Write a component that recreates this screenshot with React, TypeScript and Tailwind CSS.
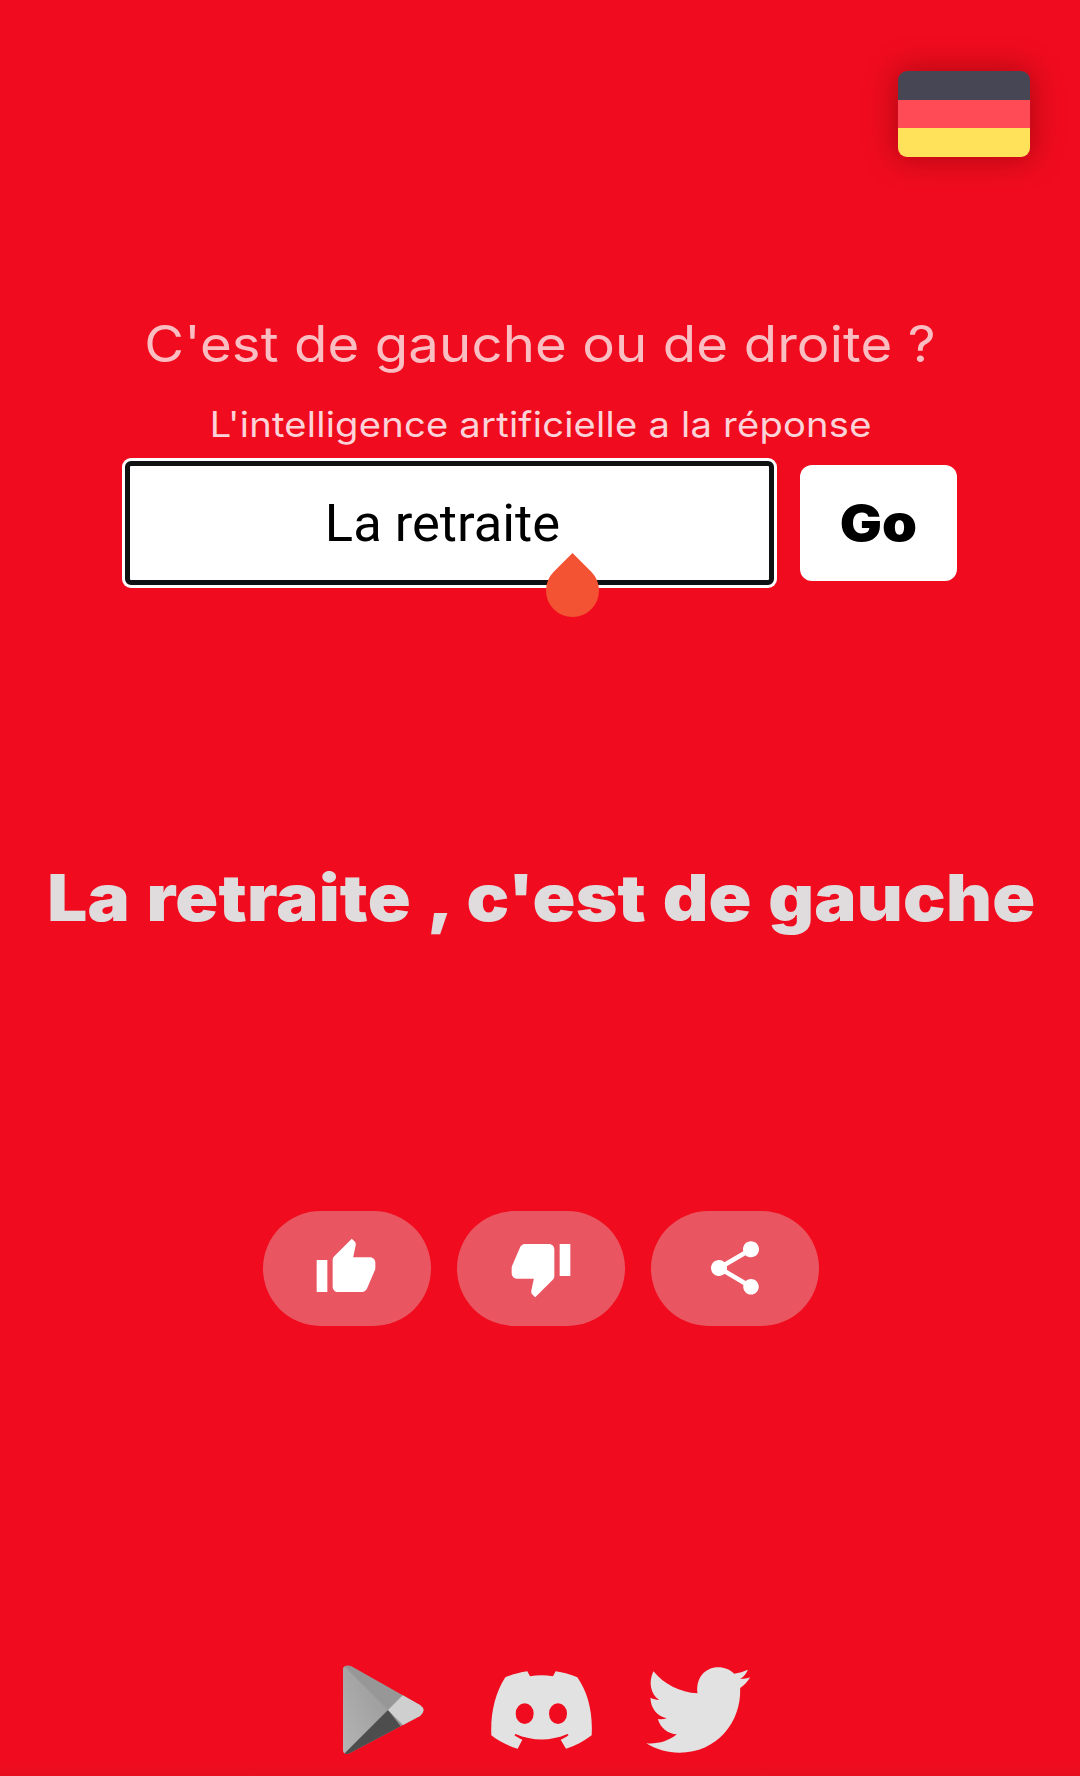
import { MdShare, MdThumbDown, MdThumbUp } from "react-icons/md";

function Flag() {
  return (
    <button
      aria-label="Deutsch"
      className="flex h-[86px] w-[132px] flex-col overflow-hidden rounded-[9px] shadow-[0_0_30px_3px_rgba(60,0,0,0.34)]"
    >
      <span className="w-full flex-1 bg-[#464655]" />
      <span className="w-full flex-1 bg-[#ff4b55]" />
      <span className="w-full flex-1 bg-[#ffe15a]" />
    </button>
  );
}

function PlayStore() {
  return (
    <svg viewBox="0 0 82 90" className="h-[90px] w-[82px]">
      <defs>
        <linearGradient id="left" x1="1" y1="0" x2="0" y2="1">
          <stop offset="0" stopColor="#979797" />
          <stop offset="1" stopColor="#b5b5b5" />
        </linearGradient>
        <clipPath id="shape">
          <path d="M0 4Q1 -1 8 1L77 40Q84 45 77 51L7 88Q0 91 0 84Z" />
        </clipPath>
      </defs>
      <g clipPath="url(#shape)">
        <path d="M0 0H82V90H0Z" fill="#979797" />
        <path d="M2 2L45 45L0 90V0Z" fill="url(#left)" />
        <path d="M45 45L0 90V92H82Z" fill="#4d4d4d" />
        <path d="M45 45L59 31L66 24H82V82Z" fill="#cfcfcf" />
      </g>
    </svg>
  );
}

function Discord() {
  return (
    <svg viewBox="513 92 303 234" className="h-[78px] w-[101px]" fill="currentColor">
      <path
        fillRule="evenodd"
        d="M622 93C600 96 577 102 556 111C525 158 511 220 514 285C537 303 565 317 593 325L607 298C598 294 590 290 583 284L587 281C637 303 692 303 742 281L746 284C739 290 731 294 722 298L738 325C766 317 791 303 815 285C819 215 803 155 772 111C751 102 729 96 707 93L699 108C677 104 652 104 630 108ZM587 220A27 31 0 1 0 641 220A27 31 0 1 0 587 220ZM687 220A27 31 0 1 0 741 220A27 31 0 1 0 687 220Z"
      />
    </svg>
  );
}

function Twitter() {
  return (
    <svg viewBox="138 79 314 258" className="h-[86px] w-[105px]" fill="currentColor">
      <path d="M160 92C190 130 240 156 292 158C286 112 315 80 354 80C373 80 390 87 402 99C417 97 430 92 443 87C439 98 430 108 420 115C431 115 441 113 450 110C443 123 432 134 420 142C424 245 350 336 238 336C202 336 166 326 138 308C172 311 204 302 230 281C204 280 181 262 173 235C182 237 191 236 200 233C171 226 151 203 151 171C160 175 168 177 177 178C151 160 144 124 160 92Z" />
    </svg>
  );
}

const pill =
  "flex h-[115px] w-[168px] items-center justify-center rounded-full bg-[#e95661] text-white";

export default function App() {
  return (
    <main className="flex h-[1776px] w-[1080px] flex-col items-center overflow-hidden bg-[linear-gradient(#f00c1e_0px,#f00c1e_1762px,#e60d1f_1776px)] font-['Inter',sans-serif]">
      <header className="flex h-[310px] w-full justify-end pt-[71px] pr-[50px]">
        <Flag />
      </header>
      <h1 className="h-[82px] origin-center scale-x-[1.09] text-[50px] leading-[69px] font-normal tracking-[0.1px] whitespace-nowrap text-[#f9bdc2]">
        C'est de gauche ou de droite ?
      </h1>
      <p className="h-[66px] origin-center scale-x-[1.09] pl-[2px] text-[35px] leading-[65px] font-normal tracking-[0.2px] whitespace-nowrap text-[#fcd3d8]">
        L'intelligence artificielle a la réponse
      </p>
      <form
        className="flex h-[130px] items-center gap-[23px] pr-[2px]"
        onSubmit={(e) => e.preventDefault()}
      >
        <div className="relative h-[130px] w-[655px] rounded-[9px] bg-white p-[3px]">
          <input
            defaultValue="La retraite"
            className="h-full w-full rounded-[6px] border-[5px] border-[#101214] bg-white pr-[13px] text-center font-[Roboto,sans-serif] text-[52.5px] text-black outline-none"
          />
          <span className="absolute top-[106px] left-[424px] h-[53px] w-[53px] rotate-45 rounded-tl-none rounded-tr-full rounded-br-full rounded-bl-full bg-[#f35233]" />
        </div>
        <button className="h-[116px] w-[157px] rounded-[12px] bg-white text-[50px] font-black text-black">
          <span className="inline-block scale-x-[1.12]">Go</span>
        </button>
      </form>
      <h2 className="mt-[262px] h-[100px] origin-center scale-x-[1.09] pl-[2px] text-[65px] leading-[95px] font-black tracking-[0.2px] [word-spacing:2px] whitespace-nowrap text-[#e0dcdd]">
        La retraite , c'est de gauche
      </h2>
      <div className="mt-[261px] flex gap-[26px] pl-[2px]">
        <button aria-label="D'accord" className={pill}>
          <MdThumbUp className="size-16 -translate-x-px -translate-y-px" />
        </button>
        <button aria-label="Pas d'accord" className={pill}>
          <MdThumbDown className="size-16 -translate-y-px" />
        </button>
        <button aria-label="Partager" className={pill}>
          <MdShare className="size-16 -translate-y-px" />
        </button>
      </div>
      <footer className="mt-[329px] flex h-[110px] items-center gap-[54px] pl-[13px] text-[#e2e2e2]">
        <PlayStore />
        <span className="ml-[12px]">
          <Discord />
        </span>
        <Twitter />
      </footer>
    </main>
  );
}
